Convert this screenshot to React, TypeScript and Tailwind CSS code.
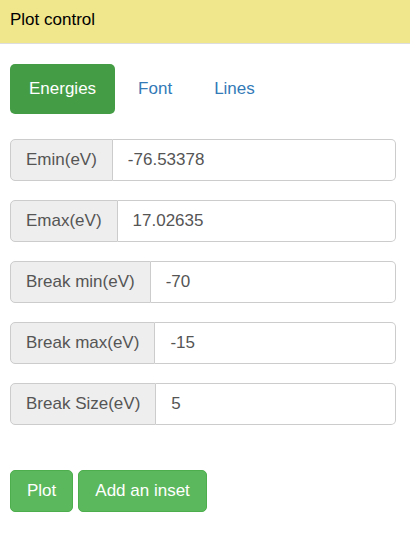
import React, { useState } from "react";

const fields = [
  { label: "Emin(eV)", value: "-76.53378" },
  { label: "Emax(eV)", value: "17.02635" },
  { label: "Break min(eV)", value: "-70" },
  { label: "Break max(eV)", value: "-15" },
  { label: "Break Size(eV)", value: "5" },
];

const tabs = ["Energies", "Font", "Lines"];

export default function App() {
  const [active, setActive] = useState("Energies");

  return (
    <div className="min-h-[551px] bg-white font-['Liberation_Sans',Arial,sans-serif] text-[17px]">
      {/* Header */}
      <div className="flex h-[44px] items-center border-b border-[#ddd] bg-[#f0e68c] px-[10px] pb-[4px] text-black">
        Plot control
      </div>

      <div className="pl-[10px] pr-[14px]">
        {/* Pills */}
        <nav className="mt-[20px] flex gap-[4px]">
          {tabs.map((t) => (
            <button
              key={t}
              onClick={() => setActive(t)}
              className={`flex h-[50px] items-center rounded-[5px] px-[19px] ${
                active === t ? "bg-[#449d44] text-white" : "text-[#337ab7]"
              }`}
            >
              {t}
            </button>
          ))}
        </nav>

        {/* Fields */}
        <div className="mt-[25px] flex flex-col gap-[19px]">
          {fields.map((f) => (
            <div key={f.label} className="flex h-[42px] w-[386px] text-[#555]">
              <span className="flex items-center rounded-l-[5px] border border-[#ccc] bg-[#eee] px-[15px]">
                {f.label}
              </span>
              <input
                defaultValue={f.value}
                className="min-w-0 flex-1 rounded-r-[5px] border border-l-0 border-[#ccc] bg-white px-[15px] text-[#555] outline-none"
              />
            </div>
          ))}
        </div>

        {/* Actions */}
        <div className="mt-[45px] flex gap-[5px]">
          <button className="h-[42px] rounded-[5px] border border-[#4cae4c] bg-[#5cb85c] px-[16px] text-white">
            Plot
          </button>
          <button className="h-[42px] rounded-[5px] border border-[#4cae4c] bg-[#5cb85c] px-[16px] text-white">
            Add an inset
          </button>
        </div>
      </div>
    </div>
  );
}
